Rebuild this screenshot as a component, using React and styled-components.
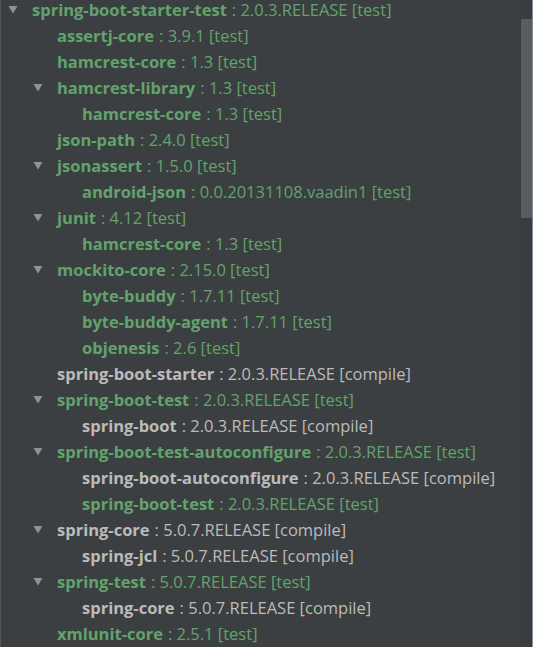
import styled, { createGlobalStyle } from 'styled-components'

const GlobalStyle = createGlobalStyle`
  html, body {
    margin: 0;
    padding: 0;
    background: #3c3f41;
  }
`

const Panel = styled.div`
  display: flex;
  width: 533px;
  height: 647px;
  overflow: hidden;
  background: #3c3f41;
  border-left: 1px solid #555859;
  box-sizing: border-box;
  font-family: "Open Sans", "Noto Sans", sans-serif;
  font-size: 16.5px;
  line-height: 19px;
`

const Tree = styled.div`
  flex: 1;
`

const Row = styled.div`
  display: flex;
  align-items: flex-start;
  height: 26px;
  padding-left: ${p => 7 + p.level * 25}px;
  white-space: nowrap;
  color: ${p => (p.test ? '#62a36d' : '#bbbbbb')};
`

const Arrow = styled.span`
  width: 24px;
  height: 19px;
  flex: none;
  display: flex;
  align-items: center;
`

const Name = styled.b`
  font-weight: 700;
`

const Meta = styled.span`
  margin-left: 5px;
`

const Track = styled.div`
  width: 14px;
  flex: none;
  background: #3a3d3f;
  display: flex;
  justify-content: flex-end;
  border-right: 1px solid #7f8b97;
`

const Thumb = styled.div`
  width: 11px;
  height: 199px;
  margin-top: 19px;
  background: #5a5d5e;
`

const deps = [
  [0, 'spring-boot-starter-test', '2.0.3.RELEASE', 'test', true],
  [1, 'assertj-core', '3.9.1', 'test'],
  [1, 'hamcrest-core', '1.3', 'test'],
  [1, 'hamcrest-library', '1.3', 'test', true],
  [2, 'hamcrest-core', '1.3', 'test'],
  [1, 'json-path', '2.4.0', 'test'],
  [1, 'jsonassert', '1.5.0', 'test', true],
  [2, 'android-json', '0.0.20131108.vaadin1', 'test'],
  [1, 'junit', '4.12', 'test', true],
  [2, 'hamcrest-core', '1.3', 'test'],
  [1, 'mockito-core', '2.15.0', 'test', true],
  [2, 'byte-buddy', '1.7.11', 'test'],
  [2, 'byte-buddy-agent', '1.7.11', 'test'],
  [2, 'objenesis', '2.6', 'test'],
  [1, 'spring-boot-starter', '2.0.3.RELEASE', 'compile'],
  [1, 'spring-boot-test', '2.0.3.RELEASE', 'test', true],
  [2, 'spring-boot', '2.0.3.RELEASE', 'compile'],
  [1, 'spring-boot-test-autoconfigure', '2.0.3.RELEASE', 'test', true],
  [2, 'spring-boot-autoconfigure', '2.0.3.RELEASE', 'compile'],
  [2, 'spring-boot-test', '2.0.3.RELEASE', 'test'],
  [1, 'spring-core', '5.0.7.RELEASE', 'compile', true],
  [2, 'spring-jcl', '5.0.7.RELEASE', 'compile'],
  [1, 'spring-test', '5.0.7.RELEASE', 'test', true],
  [2, 'spring-core', '5.0.7.RELEASE', 'compile'],
  [1, 'xmlunit-core', '2.5.1', 'test'],
]

function Triangle() {
  return (
    <svg width="10" height="9" viewBox="0 0 10 9">
      <path d="M0.5 1 L9.5 1 L5 8.5 Z" fill="#8f9193" />
    </svg>
  )
}

export default function App() {
  return (
    <>
      <GlobalStyle />
      <Panel>
        <Tree>
          {deps.map(([level, name, version, scope, open], i) => (
            <Row key={i} level={level} test={scope === 'test'}>
              <Arrow>{open && <Triangle />}</Arrow>
              <Name>{name}</Name>
              <Meta>: {version} [{scope}]</Meta>
            </Row>
          ))}
        </Tree>
        <Track>
          <Thumb />
        </Track>
      </Panel>
    </>
  )
}
